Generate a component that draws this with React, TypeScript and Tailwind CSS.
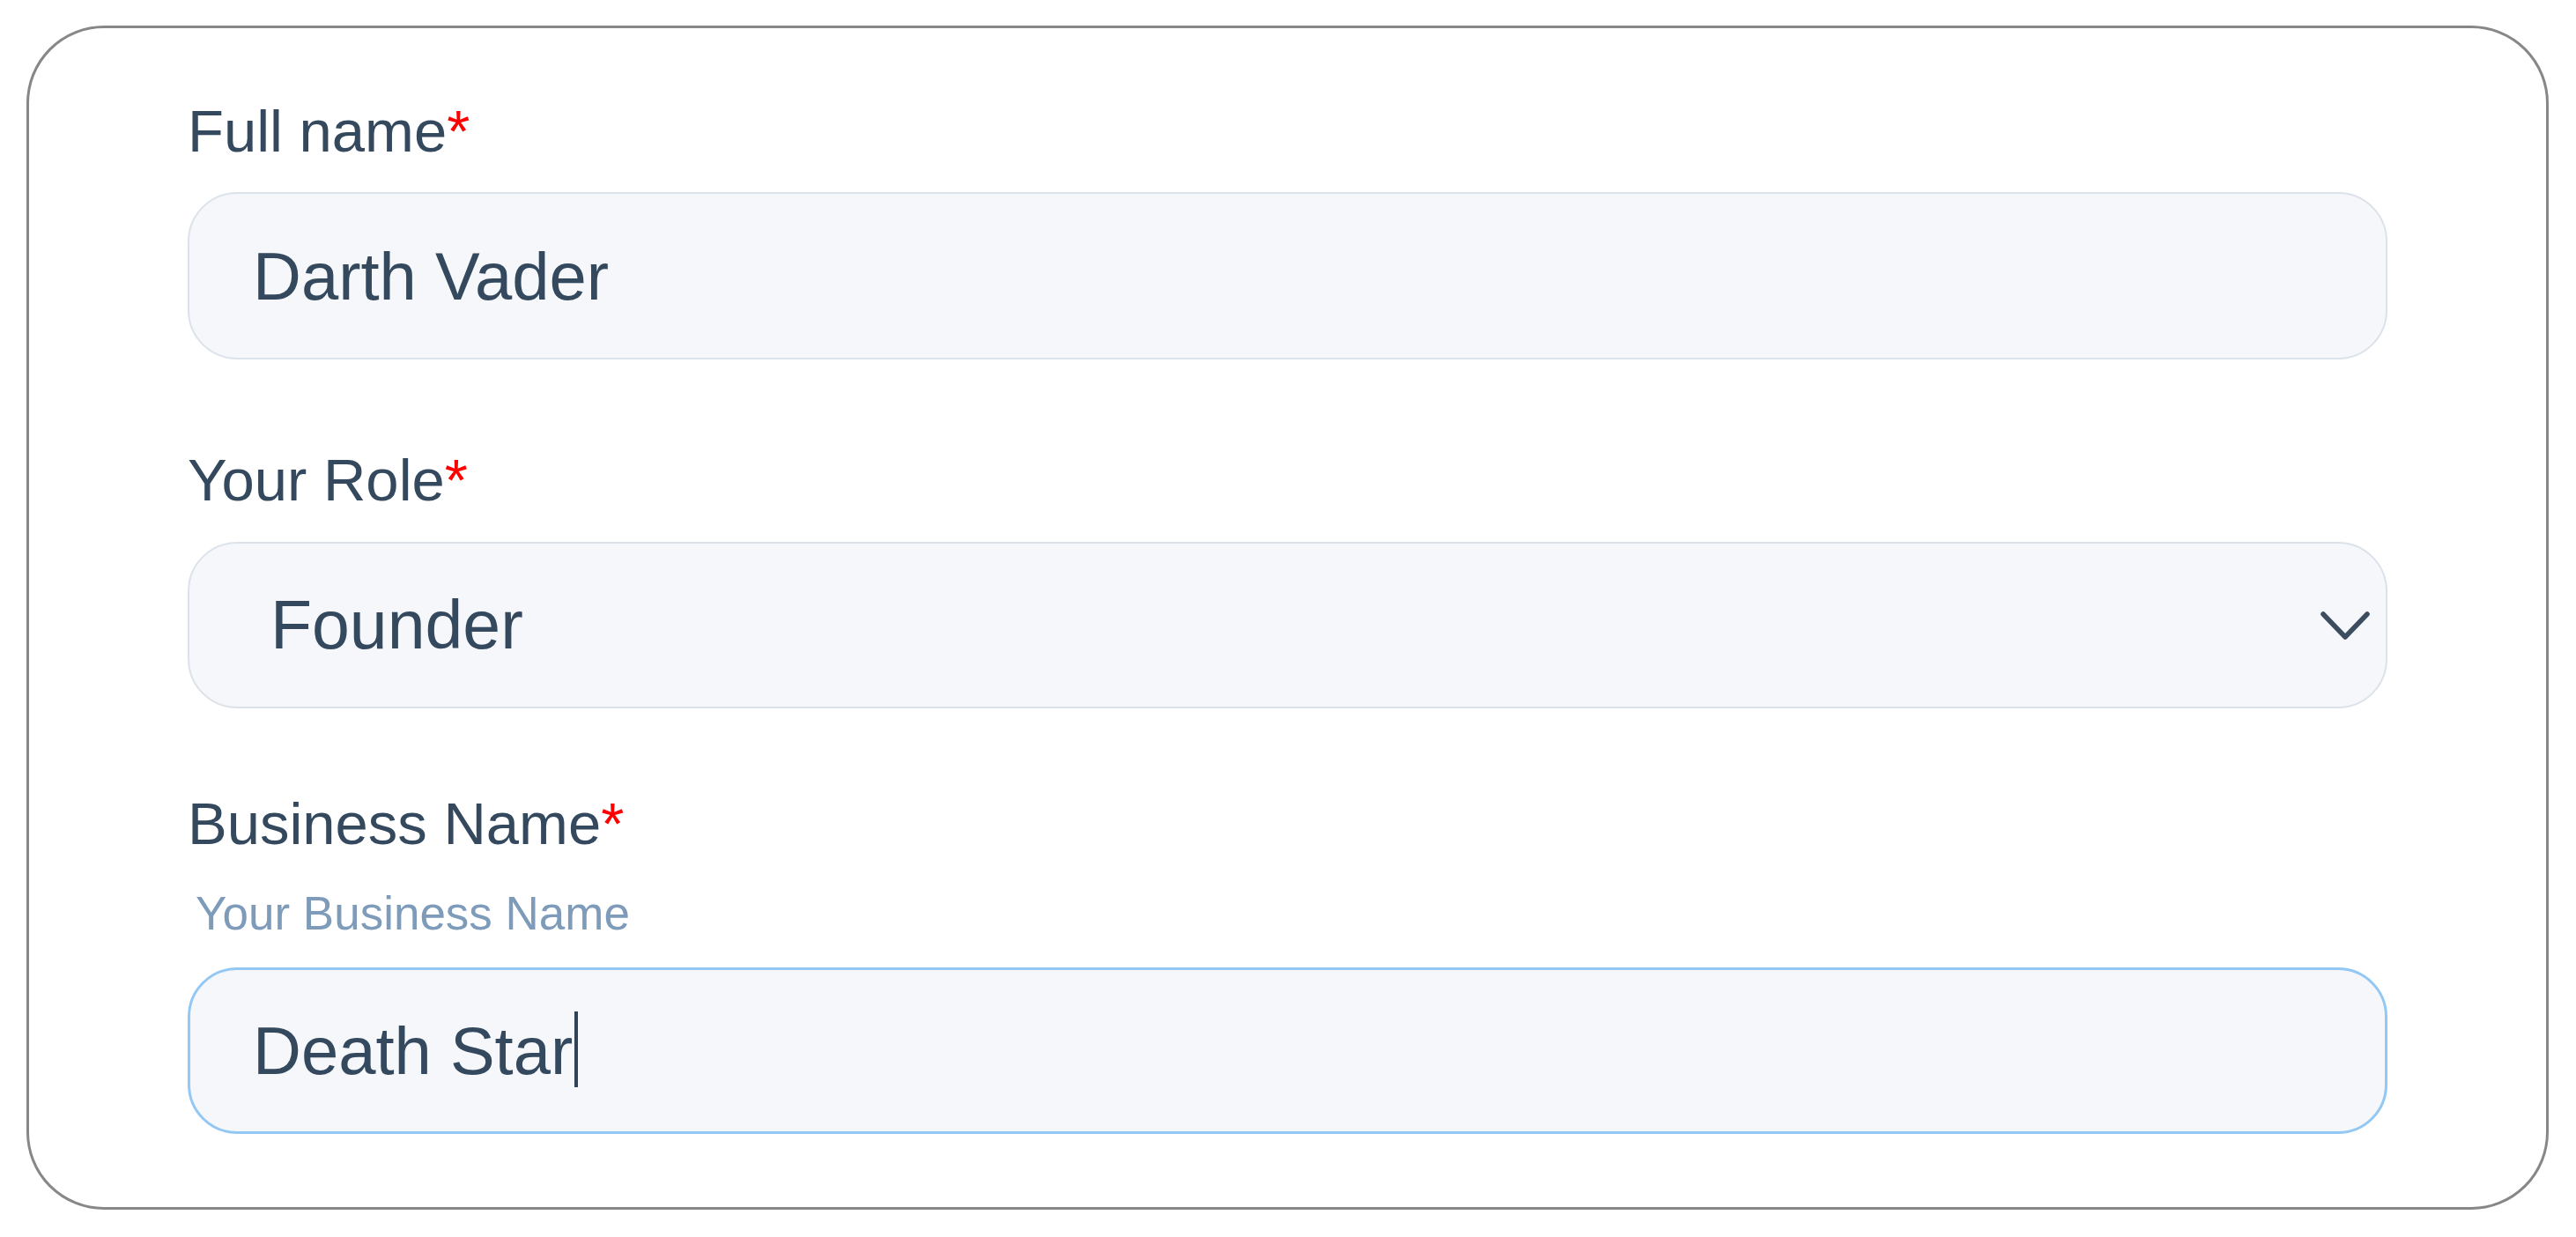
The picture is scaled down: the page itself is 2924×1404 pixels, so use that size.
import { useState } from 'react';

const font = { fontFamily: '"Liberation Sans", Arial, Helvetica, sans-serif' };

function Label({ text }: { text: string }) {
    return (
        <label className="block h-[80px] text-[67px] leading-[80px] text-[#34495e]">
            {text}
            <span className="text-[#ff0000]">*</span>
        </label>
    );
}

export default function App() {
    const [role, setRole] = useState('Founder');

    return (
        <div className="h-screen w-full bg-white pt-[29px] pl-[30px] pr-[31px] pb-[31px]" style={font}>
            <div className="flex h-full flex-col rounded-[88px] border-[3px] border-[#878787] bg-white px-[180px] pt-[77px]">
                <Label text="Full name" />
                <input
                    readOnly
                    value="Darth Vader"
                    className="mt-[29px] h-[190px] w-full rounded-[56px] border-2 border-[#dbe2ea] bg-[#f5f7fa] pl-[72px] text-[76px] text-[#34495e] outline-none"
                />

                <div className="mt-[97px]">
                    <Label text="Your Role" />
                </div>
                <div className="relative mt-[30px] h-[189px] w-full">
                    <select
                        value={role}
                        onChange={(e) => setRole(e.target.value)}
                        className="h-full w-full appearance-none rounded-[56px] border-2 border-[#dbe2ea] bg-[#f5f7fa] pl-[92px] text-[77px] text-[#34495e] outline-none"
                    >
                        <option>Founder</option>
                        <option>Co-founder</option>
                        <option>Employee</option>
                    </select>
                    {/* chevron */}
                    <svg
                        className="pointer-events-none absolute right-[19px] top-1/2 -translate-y-1/2"
                        width="58"
                        height="36"
                        viewBox="0 0 58 36"
                        fill="none"
                    >
                        <polyline points="4,5 29,31 54,5" stroke="#3b4d5f" strokeWidth="5.5" strokeLinecap="round" strokeLinejoin="round" />
                    </svg>
                </div>

                <div className="mt-[91px]">
                    <Label text="Business Name" />
                </div>
                <div className="mt-[32px] h-[60px] pl-[9px] text-[53px] leading-[60px] text-[#7e9bba]">Your Business Name</div>
                <div
                    role="textbox"
                    className="mt-[31px] flex h-[189px] w-full items-center rounded-[56px] border-[3px] border-[#93c8f4] bg-[#f5f7fa] pl-[71px] text-[76px] text-[#34495e]"
                >
                    <span>Death Star</span>
                    <span className="ml-[2px] mb-[4px] inline-block h-[86px] w-[4px] bg-[#2f4256]" />
                </div>
            </div>
        </div>
    );
}
